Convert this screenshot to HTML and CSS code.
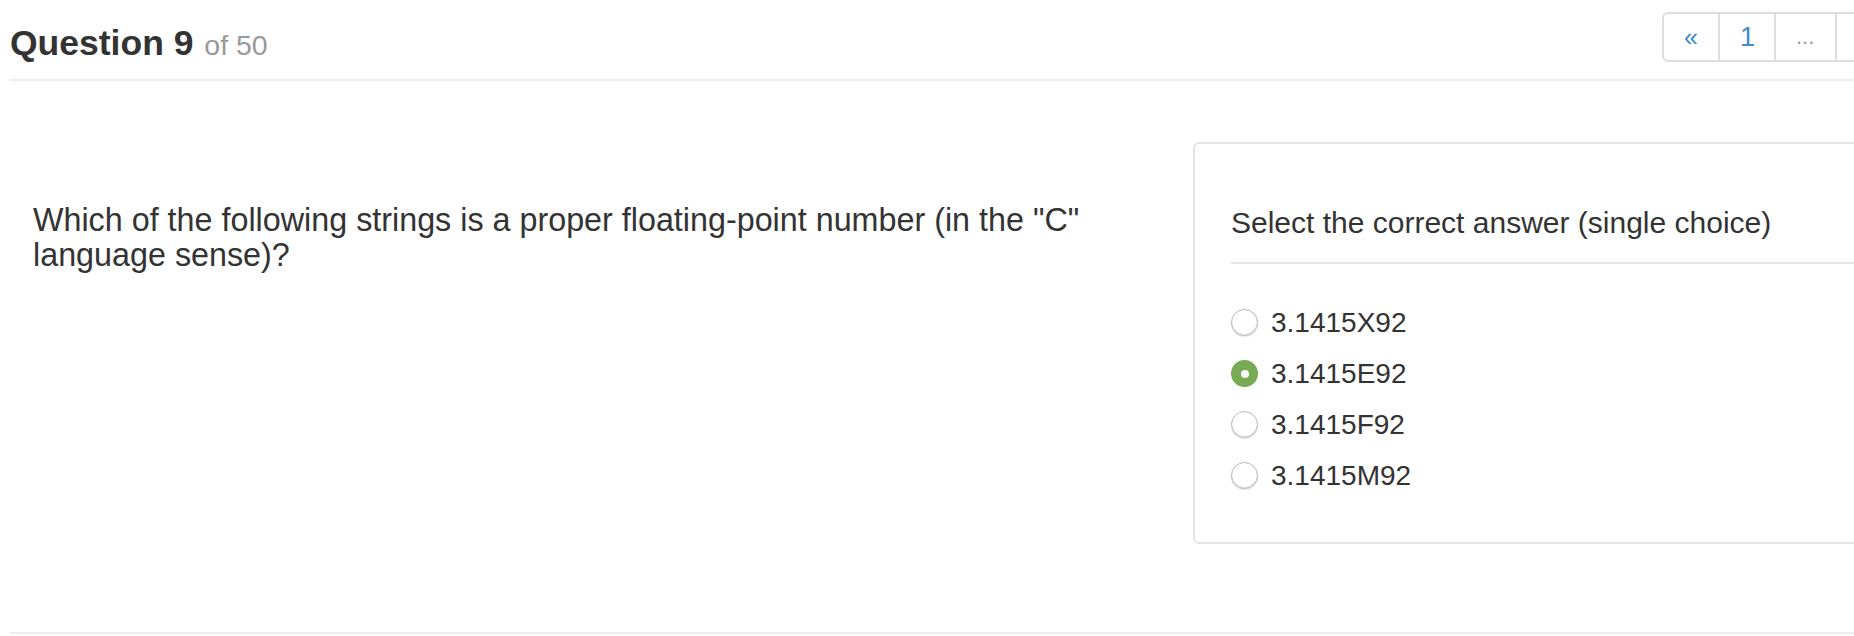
FILE: index.html
```html
<!DOCTYPE html>
<html lang="en">
<head>
<meta charset="utf-8">
<title>Question 9 of 50</title>
<link rel="stylesheet" href="styles.css">
</head>
<body>
<div class="page">
  <header class="page-header">
    <h1 class="title">Question 9 <small class="title-sub">of 50</small></h1>
    <ul class="pager">
      <li class="pager-item"><a class="pager-link pager-first" href="#">&laquo;</a></li>
      <li class="pager-item"><a class="pager-link pager-num" href="#">1</a></li>
      <li class="pager-item"><span class="pager-link pager-gap">...</span></li>
      <li class="pager-item"><span class="pager-link pager-rest" aria-hidden="true"></span></li>
    </ul>
  </header>
  <main class="row">
    <section class="col col-question">
      <p class="question">Which of the following strings is a proper floating-point number (in the "C" language sense)?</p>
    </section>
    <section class="col col-answer">
      <div class="panel">
        <h3 class="panel-title">Select the correct answer (single choice)</h3>
        <ul class="choices">
          <li class="choice"><span class="radio"></span><span class="choice-text">3.1415X92</span></li>
          <li class="choice"><span class="radio radio-on"></span><span class="choice-text">3.1415E92</span></li>
          <li class="choice"><span class="radio"></span><span class="choice-text">3.1415F92</span></li>
          <li class="choice"><span class="radio"></span><span class="choice-text">3.1415M92</span></li>
        </ul>
      </div>
    </section>
  </main>
  <div class="bottom-rule"></div>
</div>
</body>
</html>
```

FILE: styles.css
```css
html, body {
  margin: 0;
  padding: 0;
  background: #fff;
  overflow: hidden;
}
body {
  font-family: "Liberation Sans", Arial, sans-serif;
  color: #333;
  width: 1854px;
  height: 636px;
}
.page {
  width: 2330px;
  padding-left: 10px;
}
.page-header {
  display: grid;
  grid-template-columns: 1652px auto;
  align-items: start;
  border-bottom: 2px solid #eee;
  height: 81px;
  box-sizing: border-box;
}
.title {
  margin: 23px 0 0;
  font-size: 35.5px;
  line-height: 40px;
  font-weight: bold;
  color: #333;
}
.title-sub {
  font-size: 28.5px;
  font-weight: normal;
  color: #999;
  margin-left: 1px;
}
.pager {
  display: flex;
  list-style: none;
  margin: 12px 0 0;
  padding: 0;
}
.pager-item {
  display: flex;
}
.pager-link {
  display: block;
  height: 46px;
  line-height: 46px;
  padding: 0 20px;
  font-size: 25px;
  color: #428bca;
  text-decoration: none;
  border: 2px solid #ddd;
  border-left-width: 0;
  background: #fff;
}
.pager-first {
  border-left-width: 2px;
  border-radius: 6px 0 0 6px;
  width: 14px;
}
.pager-num {
  width: 14px;
  font-size: 27px;
}
.pager-gap {
  color: #999;
  width: 19px;
  font-size: 22px;
}
.pager-rest {
  width: 40px;
}
.row {
  display: grid;
  grid-template-columns: 1160px 1160px;
  height: 549px;
}
.col {
  padding: 0 23px;
}
.question {
  margin: 122px 0 0;
  font-size: 32.3px;
  line-height: 35px;
}
.panel {
  margin-top: 61px;
  border: 2px solid #e3e3e3;
  border-radius: 6px;
  padding: 62px 0 41px 36px;
}
.panel-title {
  margin: 0;
  font-size: 30px;
  line-height: 33px;
  font-weight: normal;
  padding-bottom: 23px;
  border-bottom: 2px solid #e5e5e5;
}
.choices {
  list-style: none;
  margin: 33px 0 0;
  padding: 0;
}
.choice {
  display: flex;
  align-items: center;
  height: 51px;
  font-size: 28px;
}
.radio {
  box-sizing: border-box;
  width: 27px;
  height: 27px;
  border-radius: 50%;
  border: 1px solid #b8b8b8;
  background: #fff;
  box-shadow: inset 0 -1px 1px rgba(0,0,0,0.12), 0 1px 1px rgba(0,0,0,0.1);
  margin-right: 13px;
  display: flex;
  align-items: center;
  justify-content: center;
}
.radio-on {
  border: none;
  background: #77aa52;
  box-shadow: none;
}
.radio-on::after {
  content: "";
  width: 8px;
  height: 8px;
  border-radius: 50%;
  background: #fff;
}
.bottom-rule {
  height: 2px;
  background: #eee;
  margin-top: 2px;
}
```
